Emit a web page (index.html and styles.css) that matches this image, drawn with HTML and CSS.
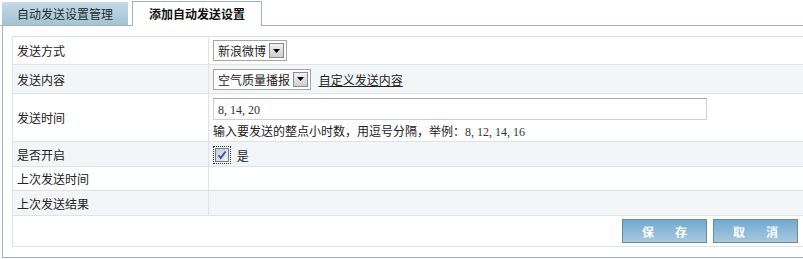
FILE: index.html
```html
<!DOCTYPE html>
<html lang="zh-CN">
<head>
    <meta charset="UTF-8">
    <title>添加自动发送设置</title>
    <link rel="stylesheet" href="styles.css">
</head>
<body>

<div class="tabs">
    <div class="tab">自动发送设置管理</div>
    <div class="tab active">添加自动发送设置</div>
</div>

<div class="panel">
    <table class="form-table">
        <tr class="row-send-way">
            <td class="label">发送方式</td>
            <td class="value">
                <span class="select">新浪微博<span class="arrow"><svg width="7" height="4" viewBox="0 0 7 4"><path d="M0 0H7L3.5 4Z" fill="#000"/></svg></span></span>
            </td>
        </tr>
        <tr class="alt row-content">
            <td class="label">发送内容</td>
            <td class="value">
                <span class="select">空气质量播报<span class="arrow"><svg width="7" height="4" viewBox="0 0 7 4"><path d="M0 0H7L3.5 4Z" fill="#000"/></svg></span></span>
                <a href="#" class="custom-link">自定义发送内容</a>
            </td>
        </tr>
        <tr class="row-time">
            <td class="label">发送时间</td>
            <td class="value">
                <div class="text-input"><span class="num">8, 14, 20</span></div>
                <div class="hint">输入要发送的整点小时数，用逗号分隔，举例：<span class="num">8, 12, 14, 16</span></div>
            </td>
        </tr>
        <tr class="alt row-enable">
            <td class="label">是否开启</td>
            <td class="value">
                <span class="checkbox"><svg width="14" height="14" viewBox="0 0 14 14">
                    <defs><linearGradient id="cb" x1="0" y1="0" x2="1" y2="1"><stop offset="0" stop-color="#c9ccd6"/><stop offset="1" stop-color="#f2f2f4"/></linearGradient></defs>
                    <rect x="0.5" y="0.5" width="13" height="13" fill="url(#cb)" stroke="#6f7c8c"/>
                    <path d="M3.5 7.2L5.8 10L10.5 3.5" fill="none" stroke="#2f4fa8" stroke-width="1.8"/>
                </svg></span>
                <span class="check-text">是</span>
            </td>
        </tr>
        <tr class="row-last-time">
            <td class="label">上次发送时间</td>
            <td class="value"></td>
        </tr>
        <tr class="alt row-last-result">
            <td class="label">上次发送结果</td>
            <td class="value"></td>
        </tr>
        <tr class="row-actions">
            <td colspan="2" class="actions">
                <button class="btn"><span>保</span><span>存</span></button>
                <button class="btn"><span>取</span><span>消</span></button>
            </td>
        </tr>
    </table>
</div>

</body>
</html>
```

FILE: styles.css
```css
html, body {
    overflow: hidden;
}
body {
    margin: 0;
    padding: 0;
    background-color: #fff;
    font-family: 'Noto Sans CJK SC', 'DejaVu Sans', sans-serif;
    font-size: 12px;
    color: #222;
}
.tabs {
    display: flex;
    align-items: flex-end;
    gap: 4px;
    height: 23px;
    padding: 2px 0 0 2px;
    border-bottom: 1px solid #9db4bf;
}
.tab {
    width: 126px;
    height: 23px;
    line-height: 23px;
    text-align: center;
    background: linear-gradient(#c4dae5, #a4c3d3);
    color: #1f2a30;
}
.tab.active {
    width: 128px;
    background: #fff;
    border: 1px solid #9db4bf;
    border-bottom: none;
    margin-bottom: -1px;
    font-weight: bold;
    color: #111;
    line-height: 24px;
    height: 24px;
}
.panel {
    width: 830px;
    margin-left: 2px;
    padding: 10px 9px 10px 9px;
    border: 1px solid #9db4bf;
    border-top: none;
}
.form-table {
    width: 796px;
    border-collapse: collapse;
    border: 1px solid #dde4e7;
}
.form-table td {
    border: 1px solid #dde4e7;
    padding: 0;
    vertical-align: middle;
}
.form-table tr.alt td {
    background-color: #f3f6f7;
}
.label {
    width: 191px;
    padding-left: 4px !important;
}
.value {
    padding-left: 4px !important;
}
.row-send-way td { height: 27px; }
.row-content td { height: 28px; }
.row-time td { height: 47px; }
.row-enable td { height: 24px; }
.row-last-time td { height: 23px; }
.row-last-result td { height: 24px; }
.row-actions td { height: 30px; }

.select {
    display: inline-flex;
    align-items: center;
    height: 19px;
    padding: 0 2px 0 4px;
    border: 1px solid #a6a6a6;
    background: #fff;
    vertical-align: middle;
}
.arrow {
    display: inline-flex;
    align-items: center;
    justify-content: center;
    width: 13px;
    height: 13px;
    margin-left: 3px;
    border: 1px solid #8a8a8a;
    background: linear-gradient(#f2f2f2, #cfcfcf);
}
.custom-link {
    color: #222;
    text-decoration: underline;
    margin-left: 5px;
    vertical-align: middle;
}
.text-input {
    width: 488px;
    height: 20px;
    line-height: 20px;
    padding-left: 4px;
    border: 1px solid #cfcfcf;
    border-top-color: #a8a8a8;
    margin-top: 3px;
}
.num {
    font-family: 'Liberation Serif', serif;
    font-size: 12px;
    color: #333;
}
.hint {
    margin-top: 2px;
    line-height: 18px;
}
.checkbox {
    display: inline-block;
    width: 14px;
    height: 14px;
    outline: 1px dotted #333;
    outline-offset: 1px;
    margin-left: 2px;
    vertical-align: middle;
}
.checkbox svg {
    display: block;
}
.check-text {
    margin-left: 5px;
    vertical-align: middle;
}
.actions {
    text-align: right;
    padding-right: 9px !important;
    white-space: nowrap;
    font-size: 0;
}
.btn {
    display: inline-flex;
    justify-content: center;
    align-items: center;
    gap: 21px;
    width: 85px;
    height: 24px;
    margin-left: 6px;
    border: 1px solid #6f8996;
    background: linear-gradient(#72aad0, #a5c9e0);
    color: #fff;
    font-family: 'Noto Sans CJK SC', sans-serif;
    font-size: 12px;
    font-weight: bold;
    padding: 0;
    vertical-align: middle;
    cursor: pointer;
}
```
